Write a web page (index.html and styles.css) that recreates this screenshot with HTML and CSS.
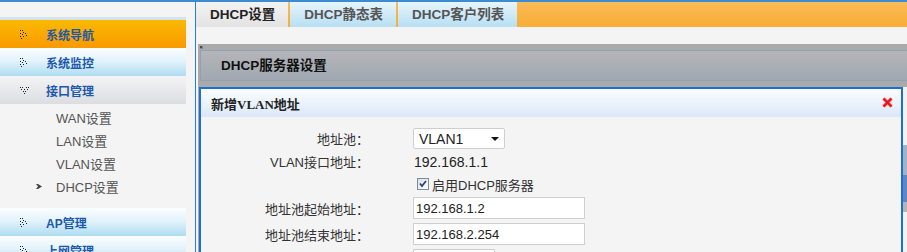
FILE: index.html
```html
<!DOCTYPE html>
<html lang="zh-CN">
<head>
    <meta charset="UTF-8" />
    <title>DHCP设置</title>
    <link rel="stylesheet" href="styles.css">
</head>
<body>
    <div class="topline"></div>
    <div class="layout">
        <div class="side">
            <div class="side-sep"></div>
            <ul class="menu">
                <li class="item orange">
                    <i class="ico"><svg width="8" height="9" viewBox="0 0 8 9"><g fill="#222"><rect x="0" y="0" width="1" height="1"/><rect x="2" y="0" width="1" height="1"/><rect x="3" y="2" width="1" height="1"/><rect x="0" y="3" width="1" height="1"/><rect x="5" y="3" width="1" height="1"/><rect x="2" y="4" width="1" height="1"/><rect x="6" y="5" width="1" height="1"/><rect x="3" y="6" width="1" height="1"/><rect x="0" y="6" width="1" height="1"/><rect x="1" y="8" width="1" height="1"/></g></svg></i>系统导航
                </li>
                <li class="item blue">
                    <i class="ico"><svg width="8" height="9" viewBox="0 0 8 9"><g fill="#222"><rect x="0" y="0" width="1" height="1"/><rect x="2" y="0" width="1" height="1"/><rect x="3" y="2" width="1" height="1"/><rect x="0" y="3" width="1" height="1"/><rect x="5" y="3" width="1" height="1"/><rect x="2" y="4" width="1" height="1"/><rect x="6" y="5" width="1" height="1"/><rect x="3" y="6" width="1" height="1"/><rect x="0" y="6" width="1" height="1"/><rect x="1" y="8" width="1" height="1"/></g></svg></i>系统监控
                </li>
                <li class="item gray">
                    <i class="ico"><svg width="9" height="7" viewBox="0 0 9 7"><g fill="#222"><rect x="0" y="0" width="1" height="1"/><rect x="2" y="0" width="1" height="1"/><rect x="6" y="0" width="1" height="1"/><rect x="8" y="0" width="1" height="1"/><rect x="1" y="2" width="1" height="1"/><rect x="4" y="2" width="1" height="1"/><rect x="7" y="2" width="1" height="1"/><rect x="3" y="4" width="1" height="1"/><rect x="5" y="4" width="1" height="1"/><rect x="4" y="6" width="1" height="1"/></g></svg></i>接口管理
                </li>
                <li class="sub">
                    <a>WAN设置</a>
                    <a>LAN设置</a>
                    <a>VLAN设置</a>
                    <a class="cur"><i class="arr"><svg width="6" height="5" viewBox="0 0 6 5"><path d="M0 0h2l4 2.5-4 2.5H0l2-2.5z" fill="#444"/></svg></i>DHCP设置</a>
                </li>
                <li class="item blue">
                    <i class="ico"><svg width="8" height="9" viewBox="0 0 8 9"><g fill="#222"><rect x="0" y="0" width="1" height="1"/><rect x="2" y="0" width="1" height="1"/><rect x="3" y="2" width="1" height="1"/><rect x="0" y="3" width="1" height="1"/><rect x="5" y="3" width="1" height="1"/><rect x="2" y="4" width="1" height="1"/><rect x="6" y="5" width="1" height="1"/><rect x="3" y="6" width="1" height="1"/><rect x="0" y="6" width="1" height="1"/><rect x="1" y="8" width="1" height="1"/></g></svg></i>AP管理
                </li>
                <li class="item blue">
                    <i class="ico"><svg width="8" height="9" viewBox="0 0 8 9"><g fill="#222"><rect x="0" y="0" width="1" height="1"/><rect x="2" y="0" width="1" height="1"/><rect x="3" y="2" width="1" height="1"/><rect x="0" y="3" width="1" height="1"/><rect x="5" y="3" width="1" height="1"/><rect x="2" y="4" width="1" height="1"/><rect x="6" y="5" width="1" height="1"/><rect x="3" y="6" width="1" height="1"/><rect x="0" y="6" width="1" height="1"/><rect x="1" y="8" width="1" height="1"/></g></svg></i>上网管理
                </li>
            </ul>
        </div>
        <div class="main">
            <div class="tabs">
                <span class="tab active">DHCP设置</span>
                <span class="tab">DHCP静态表</span>
                <span class="tab">DHCP客户列表</span>
            </div>
            <div class="content">
                <div class="panel">
                    <div class="corner"></div>
                    <div class="panel-head">DHCP服务器设置</div>
                    <div class="panel-body"></div>
                </div>
            </div>
            <!-- 弹出层 -->
            <div class="dialog">
                <div class="dialog-head">
                    <span class="dialog-title">新增VLAN地址</span>
                    <svg class="close" width="11" height="11" viewBox="0 0 11 11"><path d="M1.5 1.5l8 8M9.5 1.5l-8 8" stroke="#ff8080" stroke-width="3.6"/><path d="M1.5 1.5l8 8M9.5 1.5l-8 8" stroke="#e4141c" stroke-width="2"/></svg>
                </div>
                <div class="dialog-body">
                    <div class="row">
                        <label>地址池：</label>
                        <div class="val">
                            <div class="select"><span>VLAN1</span><i class="tri"></i></div>
                        </div>
                    </div>
                    <div class="row">
                        <label>VLAN接口地址：</label>
                        <div class="val text">192.168.1.1</div>
                    </div>
                    <div class="row">
                        <label></label>
                        <div class="val check">
                            <i class="box"><svg width="10" height="10" viewBox="0 0 10 10"><path d="M2 4.5l2 2.5 4-5" fill="none" stroke="#2e4478" stroke-width="1.8"/></svg></i>启用DHCP服务器
                        </div>
                    </div>
                    <div class="row inp">
                        <label>地址池起始地址：</label>
                        <div class="val"><input type="text" value="192.168.1.2"></div>
                    </div>
                    <div class="row inp">
                        <label>地址池结束地址：</label>
                        <div class="val"><input type="text" value="192.168.2.254"></div>
                    </div>
                    <div class="row inp">
                        <label></label>
                        <div class="val"><input class="short" type="text" value=""></div>
                    </div>
                </div>
            </div>
        </div>
    </div>
</body>
</html>
```

FILE: styles.css
```css
*{margin:0;padding:0;box-sizing:border-box;}
html,body{height:252px;overflow:hidden;}
body{background:#f4f4f4;font-family:"Liberation Sans","Noto Sans CJK SC",sans-serif;font-size:13px;color:#333;}
ul{list-style:none;}
.topline{height:2px;background:#3d8bd1;}
.layout{display:flex;height:250px;}

/* 左侧菜单 */
.side{width:196px;flex:none;background:#f4f4f4;border-right:1px solid #2a7ad6;}
.side-sep{margin-top:15px;height:3px;width:186px;background:#d3e3f0;}
.menu{width:186px;}
.menu .item{height:28px;display:flex;align-items:center;font-size:12px;font-weight:bold;color:#1d58ac;}
.menu .ico{width:26px;margin-left:20px;display:flex;align-items:center;}
.menu .orange{background:linear-gradient(#fab900,#f99a00);}
.menu .blue{background:linear-gradient(#fbfeff,#e3f3fb 45%,#afdcf1);}
.menu .gray{background:linear-gradient(#f4f4f6,#dcdde1);}
.menu .sub{padding:1.5px 0 10.5px;}
.menu .sub a{display:flex;align-items:center;height:23px;padding-left:56px;color:#555;font-size:13px;}
.menu .sub a.cur{padding-left:36px;}
.menu .sub .arr{width:20px;display:flex;align-items:center;}

/* 右侧内容 */
.main{flex:1;position:relative;background:#f4f4f4;overflow:hidden;}
.tabs{height:25px;display:flex;gap:2px;background:linear-gradient(#f9bd5a,#f8b240 60%,#f8ae38);}
.tab{height:25px;line-height:25px;padding:0 13px 0 14px;font-size:13.5px;font-weight:bold;color:#555;background:linear-gradient(#e6f5fc,#b7dff3);}
.tab.active{color:#222;background:linear-gradient(#f3f3f3,#e3e3e3);}
.content{padding:17px 0 0 2px;}
.panel{background:#aaa;padding:2px 0 0 2px;}
.corner{width:3px;height:3px;background:#4a4a4a;border-right:1px solid #888;border-bottom:1px solid #888;}
.panel-head{margin-top:1px;height:31px;line-height:29px;padding-left:20px;border:1px solid #8ca2b7;border-right:none;background:linear-gradient(#b5b5b9,#a0a8b1);font-size:13.5px;font-weight:bold;color:#111;}
.panel-body{margin-top:6px;height:170px;background:linear-gradient(#f2f2f2 0 58px,#a3b3c6 58px 88px,#5d88c1 88px 115px,#b5b5b5 115px 125px,#f2f2f2 125px);}

/* 弹出层 */
.dialog{position:absolute;left:3px;top:85px;width:704px;height:200px;border:2px solid #1b6fd6;background:#f4f4f4;}
.dialog-head{height:28px;display:flex;align-items:center;justify-content:space-between;padding:0 8px 0 10px;background:linear-gradient(#fbfdff,#dbe8f8);}
.dialog-title{font-family:"Liberation Serif","Noto Sans CJK SC",serif;font-size:13px;font-weight:bold;color:#222;}
.close{margin-top:-1px;}
.dialog-body{padding-top:10px;}
.row{display:flex;align-items:center;height:23px;}
.row:nth-child(3){height:22px;}
.row.inp{height:26px;}
.row label{width:168px;text-align:right;color:#333;}
.row .val{margin-left:44px;display:flex;align-items:center;}
.val.text{font-size:14px;color:#222;padding-left:1px;}
.select{width:92px;height:21px;display:flex;align-items:center;justify-content:space-between;padding:0 5px;background:#fff;border:1px solid #cfcfcf;border-radius:2px;font-size:14px;color:#222;}
.tri{width:0;height:0;border-left:4px solid transparent;border-right:4px solid transparent;border-top:4px solid #111;}
.val.check{padding-left:4px;color:#333;}
.check .box{width:12px;height:12px;margin-right:3px;border:1px solid #7d8b9a;background:linear-gradient(135deg,#d9dfe6,#fff);display:flex;align-items:center;justify-content:center;}
.val input{width:172px;height:22px;border:1px solid #cfcfcf;background:#fff;padding-left:2px;font-family:"Liberation Sans",sans-serif;font-size:13px;color:#222;outline:none;}
.val input.short{width:82px;}
```
